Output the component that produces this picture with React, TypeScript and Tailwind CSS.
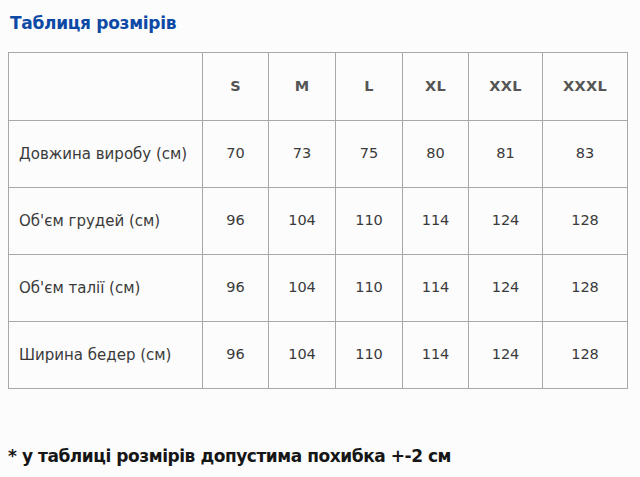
import React from 'react';

const sizes = ['S', 'M', 'L', 'XL', 'XXL', 'XXXL'];

const rows = [
  { label: 'Довжина виробу (см)', values: ['70', '73', '75', '80', '81', '83'] },
  { label: "Об'єм грудей (см)", values: ['96', '104', '110', '114', '124', '128'] },
  { label: "Об'єм талії (см)", values: ['96', '104', '110', '114', '124', '128'] },
  { label: 'Ширина бедер (см)', values: ['96', '104', '110', '114', '124', '128'] },
];

const colWidths = ['w-[194px]', 'w-[66px]', 'w-[67px]', 'w-[67px]', 'w-[66px]', 'w-[74px]', 'w-[85px]'];

export default function App() {
  return (
    <div className="w-[640px] h-[477px] bg-[#fcfcfc] font-['DejaVu_Sans',sans-serif] overflow-hidden">
      <h1 className="pl-[10px] pt-[12px] text-[17px] leading-[22px] font-bold text-[#0d4aa6] tracking-[-0.3px]">
        Таблиця розмірів
      </h1>

      <table className="ml-[8px] mt-[18px] w-[619px] table-fixed border-collapse border border-[#b4b4b4] text-[#3a3a3a]">
        <colgroup>
          {colWidths.map((w, i) => (
            <col key={i} className={w} />
          ))}
        </colgroup>
        <thead>
          <tr className="h-[68px]">
            <th className="border border-[#a8a8a8]" />
            {sizes.map((s) => (
              <th key={s} className="border border-[#a8a8a8] text-[14.5px] font-bold text-[#555] tracking-[0.3px]">
                {s}
              </th>
            ))}
          </tr>
        </thead>
        <tbody>
          {rows.map((r) => (
            <tr key={r.label} className="h-[67px]">
              <td className="border border-[#a8a8a8] pl-[10px] text-[15px] whitespace-nowrap">{r.label}</td>
              {r.values.map((v, i) => (
                <td key={i} className="border border-[#a8a8a8] text-center text-[14.5px]">
                  {v}
                </td>
              ))}
            </tr>
          ))}
        </tbody>
      </table>

      <p className="pl-[8px] mt-[56px] text-[17px] leading-[22px] font-bold text-[#161616] tracking-[-0.45px]">
        * у таблиці розмірів допустима похибка +-2 см
      </p>
    </div>
  );
}
